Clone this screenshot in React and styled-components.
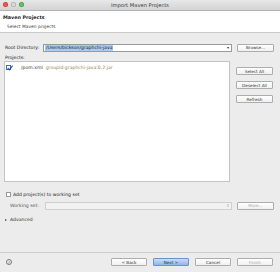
import React from "react";
import styled, { createGlobalStyle } from "styled-components";

const GlobalStyle = createGlobalStyle`
  html, body { margin: 0; padding: 0; background: #ececec; }
  body { font-family: "DejaVu Sans", "Liberation Sans", sans-serif; }
`;

const lights = ["#f0534b", "#d9d9d9", "#5fc454"];

const CheckMark = () => (
  <svg width="6" height="6" viewBox="0 0 6 6">
    <path d="M0.8 3.1 L2.4 4.8 L5.6 0.6" fill="none" stroke="#1f56b0" strokeWidth="1.2" />
  </svg>
);

const App = () => (
  <Window>
    <GlobalStyle />
    <TitleBar>
      <Lights>
        {lights.map((c) => (
          <Light key={c} $color={c} />
        ))}
      </Lights>
      <Title>Import Maven Projects</Title>
    </TitleBar>

    <Header>
      <HeaderTitle>Maven Projects</HeaderTitle>
      <HeaderSub>Select Maven projects</HeaderSub>
    </Header>

    <Body>
      <Row>
        <Label>Root Directory:</Label>
        <Combo>
          <Selected>/Users/bickson/graphchi-java</Selected>
          <ComboArrow>▾</ComboArrow>
        </Combo>
        <Button>Browse...</Button>
      </Row>

      <SectionLabel>Projects:</SectionLabel>
      <ProjectsArea>
        <List>
          <Item>
            <Check $checked>
              <CheckMark />
            </Check>
            <Pom>/pom.xml</Pom>
            <Gav>groupId:graphchi-java:0.2:jar</Gav>
          </Item>
        </List>
        <SideButtons>
          <Button>Select All</Button>
          <Button>Deselect All</Button>
          <Button>Refresh</Button>
        </SideButtons>
      </ProjectsArea>

      <CheckRow>
        <Check />
        <span>Add project(s) to working set</span>
      </CheckRow>

      <Row $indent>
        <Label $muted>Working set:</Label>
        <Combo $disabled>
          <ComboArrow $disabled>⇕</ComboArrow>
        </Combo>
        <Button $disabled>More...</Button>
      </Row>

      <Advanced>
        <Triangle />
        Advanced
      </Advanced>
    </Body>

    <Footer>
      <Help>?</Help>
      <FooterButtons>
        <Button>&lt; Back</Button>
        <Button $primary>Next &gt;</Button>
        <Button>Cancel</Button>
        <Button $disabled>Finish</Button>
      </FooterButtons>
    </Footer>
  </Window>
);

const Window = styled.div`
  width: 280px;
  height: 272px;
  display: flex;
  flex-direction: column;
  background: #ececec;
  color: #222;
  font-size: 4.6px;
  overflow: hidden;
`;

const TitleBar = styled.div`
  position: relative;
  height: 10px;
  display: flex;
  align-items: center;
  justify-content: center;
  background: linear-gradient(#e8e8e8, #d3d3d3);
  border-bottom: 1px solid #b4b4b4;
`;

const Lights = styled.div`
  position: absolute;
  left: 3px;
  top: 2px;
  display: flex;
  gap: 3px;
`;

const Light = styled.span`
  width: 5px;
  height: 5px;
  border-radius: 50%;
  background: ${(p) => p.$color};
  box-shadow: inset 0 0 0 0.5px rgba(0, 0, 0, 0.25);
`;

const Title = styled.div`
  font-size: 5.2px;
  color: #3c3c3c;
`;

const Header = styled.div`
  height: 22px;
  background: #fff;
  border-bottom: 1px solid #c8c8c8;
  padding: 4px 3px 0;
  box-sizing: border-box;
`;

const HeaderTitle = styled.div`
  font-weight: bold;
  font-size: 4.8px;
  color: #222;
`;

const HeaderSub = styled.div`
  margin: 4px 0 0 4px;
  font-size: 4.4px;
  color: #444;
`;

const Body = styled.div`
  flex: 1;
  padding: 10px 6px 0 5px;
  display: flex;
  flex-direction: column;
`;

const Row = styled.div`
  display: flex;
  align-items: center;
  height: 9px;
  padding-left: ${(p) => (p.$indent ? "5px" : "0")};
  margin-top: ${(p) => (p.$indent ? "4px" : "0")};
`;

const Label = styled.div`
  width: ${(p) => (p.$muted ? "35px" : "38px")};
  color: ${(p) => (p.$muted ? "#555" : "#222")};
  white-space: nowrap;
`;

const Combo = styled.div`
  flex: 1;
  height: 8px;
  display: flex;
  align-items: center;
  background: ${(p) => (p.$disabled ? "#f2f2f2" : "#fff")};
  border: 1px solid ${(p) => (p.$disabled ? "#cfcfcf" : "#9a9a9a")};
  box-sizing: border-box;
  margin-right: 5px;
  padding-left: 1px;
`;

const Selected = styled.span`
  background: #a9cbf5;
  color: #1a1a1a;
  line-height: 6px;
  padding: 0 1px;
`;

const ComboArrow = styled.span`
  margin-left: auto;
  width: 6px;
  text-align: center;
  font-size: 4px;
  color: ${(p) => (p.$disabled ? "#aaa" : "#333")};
`;

const Button = styled.div`
  width: 37px;
  height: 8px;
  box-sizing: border-box;
  display: flex;
  align-items: center;
  justify-content: center;
  font-size: 4.2px;
  border-radius: 1px;
  border: 1px solid ${(p) => (p.$primary ? "#6d91c9" : "#adadad")};
  background: ${(p) =>
    p.$primary
      ? "linear-gradient(#c9dcf6, #8fb6ea)"
      : "linear-gradient(#ffffff, #f0f0f0)"};
  color: ${(p) => (p.$disabled ? "#aaa" : "#333")};
  white-space: nowrap;
`;

const SectionLabel = styled.div`
  margin-top: 3px;
  height: 6px;
  color: #222;
`;

const ProjectsArea = styled.div`
  display: flex;
  margin-left: -1px;
`;

const List = styled.div`
  width: 226px;
  height: 121px;
  box-sizing: border-box;
  background: #fff;
  border: 1px solid #c4c4c4;
  margin-right: 6px;
  padding: 3px 1px;
`;

const Item = styled.div`
  display: flex;
  align-items: center;
  gap: 2px;
`;

const Check = styled.span`
  width: 5px;
  height: 5px;
  box-sizing: border-box;
  border: 0.6px solid ${(p) => (p.$checked ? "#4a6fa8" : "#9a9a9a")};
  background: #fff;
  position: relative;
  flex: none;
  & > svg {
    position: absolute;
    left: -0.5px;
    top: -1.5px;
  }
`;

const Pom = styled.span`
  margin-left: 8px;
  color: #333;
`;

const Gav = styled.span`
  margin-left: 1px;
  color: #9a7f4f;
`;

const SideButtons = styled.div`
  display: flex;
  flex-direction: column;
  gap: 6px;
  padding-top: 6px;
`;

const CheckRow = styled.div`
  display: flex;
  align-items: center;
  gap: 2px;
  margin-top: 9px;
  margin-left: 1px;
  height: 6px;
`;

const Advanced = styled.div`
  display: flex;
  align-items: center;
  gap: 3px;
  margin-top: 7px;
  color: #333;
`;

const Triangle = styled.span`
  width: 0;
  height: 0;
  border-top: 1.6px solid transparent;
  border-bottom: 1.6px solid transparent;
  border-left: 2.4px solid #444;
`;

const Footer = styled.div`
  height: 20px;
  border-top: 1px solid #cfcfcf;
  display: flex;
  align-items: center;
  padding: 0 7px 1px 6px;
  box-sizing: border-box;
`;

const Help = styled.span`
  width: 6px;
  height: 6px;
  border-radius: 50%;
  border: 0.6px solid #777;
  box-sizing: border-box;
  display: flex;
  align-items: center;
  justify-content: center;
  font-size: 4.5px;
  color: #555;
  background: linear-gradient(#fff, #e6e6e6);
`;

const FooterButtons = styled.div`
  margin-left: auto;
  display: flex;
  gap: 6px;
  & > div {
    width: 36px;
  }
`;

export default App;
